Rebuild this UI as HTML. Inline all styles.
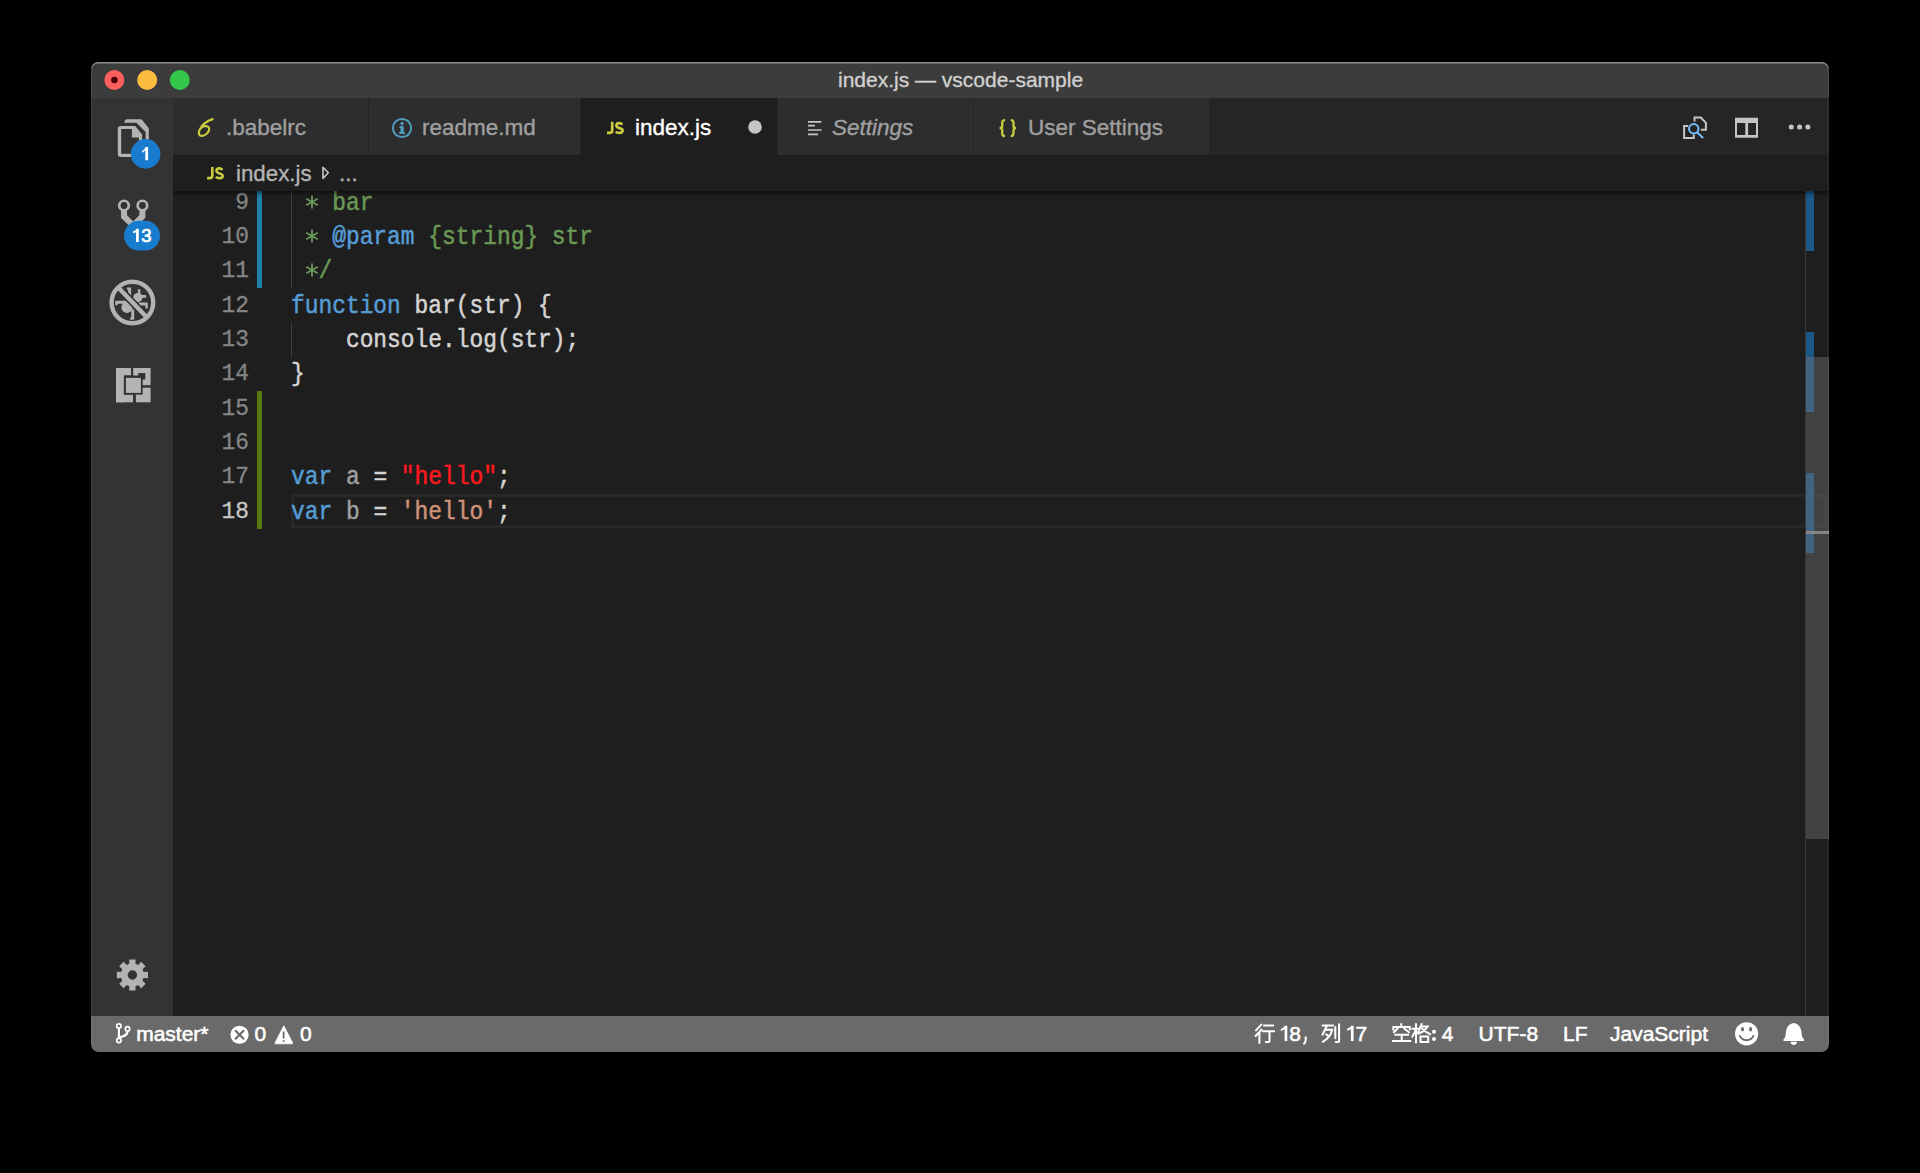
<!DOCTYPE html>
<html><head><meta charset="utf-8">
<style>
*{margin:0;padding:0;box-sizing:border-box}
html,body{width:1920px;height:1173px;background:#000;overflow:hidden}
body{font-family:"Liberation Sans",sans-serif;position:relative}
.abs{position:absolute}
#win{position:absolute;left:91px;top:62px;width:1738px;height:990px;border-radius:7px 7px 8px 8px;overflow:hidden;background:#1e1e1e}
#title{position:absolute;left:0;top:0;width:1738px;height:36px;background:#3c3c3c}
#act{position:absolute;left:0;top:36px;width:82px;height:918px;background:#333333}
#tabs{position:absolute;left:82px;top:36px;width:1656px;height:57px;background:#252526}
.tab{position:absolute;top:0;height:57px;background:#2d2d2d}
.tab.active{background:#1e1e1e}
.ui{position:absolute;font-size:22.5px;line-height:26px;white-space:pre;color:#a0a0a0;-webkit-text-stroke:0.35px currentColor}
#crumb{position:absolute;left:82px;top:93px;width:1656px;height:36px;background:#1e1e1e}
#editor{position:absolute;left:82px;top:129px;width:1656px;height:825px;background:#1e1e1e;overflow:hidden}
#status{position:absolute;left:0;top:954px;width:1738px;height:36px;background:#6a6a6a}
.st{position:absolute;font-size:21px;line-height:24px;white-space:pre;color:#fff;top:6px}
.code{position:absolute;padding-top:1.5px;-webkit-text-stroke:0.45px currentColor;transform:scaleY(1.1);transform-origin:0 24.76px;font-family:"Liberation Mono",monospace;font-size:22.88px;line-height:34.333px;white-space:pre;color:#d4d4d4}
.ln{position:absolute;padding-top:1px;-webkit-text-stroke:0.3px currentColor;transform:scaleY(1.075);transform-origin:0 24.3px;font-family:"Liberation Mono",monospace;font-size:22.88px;line-height:34.333px;white-space:pre;color:#858585;text-align:right;width:100px}
.cm{color:#6a9955}.kw{color:#569cd6}.s1{color:#ce9178}.s2{color:#ff181f}.dim{color:#a0a0a0}
</style></head><body>
<div id="win">
  <div id="title">
    <svg class="abs" style="left:0;top:0" width="120" height="36">
      <circle cx="23.4" cy="18" r="10" fill="#fc605c"/>
      <circle cx="23.4" cy="18" r="3.3" fill="#4d0000"/>
      <circle cx="56.2" cy="18" r="10" fill="#fdbc40"/>
      <circle cx="88.8" cy="18" r="10" fill="#34c84a"/>
    </svg>
    <div class="ui" style="left:747px;top:5px;color:#d0d0d0;font-size:21px">index.js — vscode-sample</div>
  </div>
  <div id="act">
    <svg class="abs" style="left:0;top:0" width="82" height="918" viewBox="91 98 82 918">
      <!-- files -->
      <path d="M124.2 122.8Q124.4 119.2 127.5 119.2H141.5L148.8 128.3V141H145.6V131.9L136.5 122.8Z" fill="#b3b3b3"/>
      <path fill-rule="evenodd" fill="#b3b3b3" d="M117.8 129.1Q117.8 125.9 121 125.9H135.2L142.1 134.5V154Q142.1 157 139 157H121Q117.8 157 117.8 154Z M121.2 129.1V153.7H138.9V137.5H131.9V129.1Z"/>
      <circle cx="145.6" cy="153.9" r="14.8" fill="#197bcd"/>
      <path d="M145.30 160.20V150.30C144.10 151.30 142.70 153.00 142.10 152.80V150.70C144.60 150.20 145.00 148.10 145.50 147.10H148.10V160.20Z" fill="#fff"/>
      <!-- git -->
      <circle cx="124" cy="205.5" r="4.75" fill="none" stroke="#b3b3b3" stroke-width="2.7"/>
      <circle cx="142.4" cy="205.5" r="4.75" fill="none" stroke="#b3b3b3" stroke-width="2.7"/>
      <path d="M124 210V216.4L133.2 225.6L142.4 216.4V210" fill="none" stroke="#b3b3b3" stroke-width="6"/>
      <rect x="124" y="220.8" width="36" height="29.7" rx="14.85" fill="#197bcd"/>
      <path d="M136.00 242.10V231.90C134.80 232.90 133.80 233.40 133.20 233.20V231.10C135.70 230.60 135.70 229.70 136.20 228.70H138.80V242.10Z" fill="#fff"/><text x="141.2" y="242.1" font-family="Liberation Sans" font-size="18.5" fill="#fff" stroke="#fff" stroke-width="0.7">3</text>
      <!-- debug -->
      <circle cx="137.8" cy="297.6" r="4.6" fill="#b3b3b3"/>
      <circle cx="127" cy="307.4" r="5.6" fill="#b3b3b3"/>
      <path fill="#b3b3b3" d="M126.9 287.6H131.1V297.5H128.1V289.6H126.9Z M137.9 289.2H140.3V295.5H137.9Z M139.5 295.1H146.1V297.8H139.5Z M138.6 302.6H147.8V308.4H145.4V305.5H138.6Z M115.3 300.8H126.6V303.8H117.5V305.2H115.3Z M131.3 309.6H134.2V319.7H130.2V317.4H131.3Z"/>
      <path d="M117.5 286.7L147 317.6" stroke="#333333" stroke-width="7.6"/>
      <path d="M117.5 286.7L147 317.6" stroke="#b3b3b3" stroke-width="4.4"/>
      <circle cx="132.4" cy="302.5" r="20.8" fill="none" stroke="#b3b3b3" stroke-width="4.4"/>
      <!-- extensions -->
      <g transform="translate(116 368)">
        <rect x="0" y="0" width="15" height="7.5" fill="#b3b3b3"/>
        <rect x="0" y="0" width="7.9" height="34.3" fill="#b3b3b3"/>
        <rect x="0" y="26.6" width="17" height="7.7" fill="#b3b3b3"/>
        <rect x="17.2" y="0" width="17.4" height="17.2" fill="#b3b3b3"/>
        <rect x="19.9" y="19.7" width="14.7" height="14.6" fill="#b3b3b3"/>
        <rect x="7.9" y="7.5" width="18.8" height="19.1" fill="#333333"/>
        <rect x="22.2" y="5" width="7.1" height="6.6" fill="#333333"/>
        <rect x="9.9" y="9.9" width="15" height="15" fill="#b3b3b3"/>
      </g>
      <!-- gear -->
      <path fill-rule="evenodd" fill="#b3b3b3" d="M135.50 963.82 L135.57 959.42 L129.23 959.42 L129.30 963.82 L126.69 964.90 L123.62 961.74 L119.14 966.22 L122.30 969.29 L121.22 971.90 L116.82 971.83 L116.82 978.17 L121.22 978.10 L122.30 980.71 L119.14 983.78 L123.62 988.26 L126.69 985.10 L129.30 986.18 L129.23 990.58 L135.57 990.58 L135.50 986.18 L138.11 985.10 L141.18 988.26 L145.66 983.78 L142.50 980.71 L143.58 978.10 L147.98 978.17 L147.98 971.83 L143.58 971.90 L142.50 969.29 L145.66 966.22 L141.18 961.74 L138.11 964.90 Z M127.70 975.00 a4.7 4.7 0 1 0 9.4 0 a4.7 4.7 0 1 0 -9.4 0 Z"/>
    </svg>
  </div>
  <div id="tabs">
    
    <svg class="abs" style="left:0;top:0" width="1656" height="57" viewBox="173 98 1656 57">
      <path d="M1694.5 121.5V117.5H1700.8L1705.9 122.8V129.8H1700.8" fill="none" stroke="#c5c5c5" stroke-width="2"/>
      <path d="M1688.2 126H1684.1V137.9H1693.8V134.6" fill="none" stroke="#c5c5c5" stroke-width="2"/>
      <circle cx="1693.75" cy="128.75" r="4.7" fill="none" stroke="#75beff" stroke-width="2"/>
      <path d="M1697.1 132.2L1703.1 138" stroke="#75beff" stroke-width="2"/>
      <path fill-rule="evenodd" fill="#c5c5c5" d="M1735 117.75H1758V137.75H1735Z M1737 123.1H1745.3V135H1737Z M1748.1 123.1H1756V135H1748.1Z"/>
      <circle cx="1791.25" cy="126.9" r="2.5" fill="#c5c5c5"/>
      <circle cx="1799.6" cy="126.9" r="2.5" fill="#c5c5c5"/>
      <circle cx="1807.9" cy="126.9" r="2.5" fill="#c5c5c5"/>
    </svg>
  <div class="tab" style="left:0;width:195px">
      <svg class="abs" style="left:21px;top:18px" width="24" height="24" viewBox="194 116.6 24 24"><path d="M212.6 119.7C207 121.6 201.5 126 199.4 131C198 134.5 199.2 136.7 202.2 136.4C205.6 136 209.2 132.8 209.2 129.6C209.2 127.2 207 126.4 204.6 126.7C202.6 127 201.2 128 200.4 129.3" fill="none" stroke="#cbcb41" stroke-width="2.2" stroke-linecap="round"/></svg>
      <div class="ui" style="left:53px;top:17px">.babelrc</div>
    </div>
    <div class="tab" style="left:196px;width:211px">
      <svg class="abs" style="left:22px;top:19px" width="22" height="22" viewBox="0 0 22 22"><circle cx="11" cy="11" r="9.1" fill="none" stroke="#519aba" stroke-width="2"/><circle cx="11" cy="6.5" r="1.65" fill="#519aba"/><path d="M8.5 9.1H12.7V15.1H13.9V17H8.2V15.1H9.5V10.9H8.5Z" fill="#519aba"/></svg>
      <div class="ui" style="left:53px;top:17px">readme.md</div>
    </div>
    <div class="tab active" style="left:408px;width:196px">
      <svg class="abs" style="left:25px;top:21px" width="20" height="17"><g transform="translate(0 3)"><path d="M6.2 -0.3V8.4Q6.2 10.85 3.6 10.85H1M16.4 2.5Q15 1.05 13.1 1.05Q10.4 1.05 10.4 3.5Q10.4 5.3 13.5 6.1Q16.6 6.9 16.6 8.6Q16.6 10.85 13.3 10.85Q11 10.85 9.7 9.6" fill="none" stroke="#cbcb41" stroke-width="2.7"/></g></svg>
      <div class="ui" style="left:54px;top:17px;color:#ffffff">index.js</div>
      <svg class="abs" style="left:167px;top:22px" width="14" height="14"><circle cx="7" cy="7" r="6.8" fill="#c5c5c5"/></svg>
    </div>
    <div class="tab" style="left:605px;width:195px">
      <svg class="abs" style="left:30px;top:22px" width="16" height="16"><path d="M0 1.9h13.5M0 5.6h7M0 10h13.5M0 14.4h10" stroke="#c5c5c5" stroke-width="1.6"/></svg>
      <div class="ui" style="left:54px;top:17px;font-style:italic">Settings</div>
    </div>
    <div class="tab" style="left:801px;width:235px">
      <svg class="abs" style="left:22px;top:17px" width="24" height="24" viewBox="996 115 24 24"><path d="M1005 120.1Q1002.2 120.1 1002.2 122.6V125.9Q1002.2 128 999.6 128Q1002.2 128 1002.2 130.1V133.6Q1002.2 136.1 1005 136.1M1010.7 120.1Q1013.5 120.1 1013.5 122.6V125.9Q1013.5 128 1016.1 128Q1013.5 128 1013.5 130.1V133.6Q1013.5 136.1 1010.7 136.1" fill="none" stroke="#cbcb41" stroke-width="2.3"/></svg>
      <div class="ui" style="left:54px;top:17px">User Settings</div>
    </div>
  </div>
  <div id="crumb">
    <svg class="abs" style="left:34px;top:11px" width="20" height="16"><g transform="translate(-0.9 1.3)"><path d="M6.2 -0.3V8.4Q6.2 10.85 3.6 10.85H1M16.4 2.5Q15 1.05 13.1 1.05Q10.4 1.05 10.4 3.5Q10.4 5.3 13.5 6.1Q16.6 6.9 16.6 8.6Q16.6 10.85 13.3 10.85Q11 10.85 9.7 9.6" fill="none" stroke="#cbcb41" stroke-width="2.6"/></g></svg>
    <div class="ui" style="left:63px;top:6px;color:#b4b4b4;font-size:22.3px">index.js</div>
    <svg class="abs" style="left:149px;top:11px" width="8" height="14"><path d="M1 1.2L6.3 6.8L1 12.4z" fill="none" stroke="#c5c5c5" stroke-width="1.6" stroke-linejoin="round"/></svg>
    <div class="ui" style="left:166px;top:6px;color:#b4b4b4;font-size:22.3px">...</div>
  </div>
  <div id="editor">
    <div class="abs" style="left:84px;top:0;width:5px;height:97.2px;background:#1b81a8"></div>
    <div class="abs" style="left:84px;top:200.2px;width:5px;height:137.4px;background:#587c0c"></div>
    <div class="abs" style="left:118px;top:0;width:1px;height:97.2px;background:#404040"></div>
    <div class="abs" style="left:118px;top:131.5px;width:1px;height:34.3px;background:#404040"></div>
    <div class="abs" style="left:118px;top:303.4px;width:1536px;height:34px;border:3px solid #282828"></div>

    <div class="ln" style="left:-24px;top:-6.3px">9</div>
    <div class="ln" style="left:-24px;top:28.03px">10</div>
    <div class="ln" style="left:-24px;top:62.37px">11</div>
    <div class="ln" style="left:-24px;top:96.7px">12</div>
    <div class="ln" style="left:-24px;top:131.03px">13</div>
    <div class="ln" style="left:-24px;top:165.37px">14</div>
    <div class="ln" style="left:-24px;top:199.7px">15</div>
    <div class="ln" style="left:-24px;top:234.03px">16</div>
    <div class="ln" style="left:-24px;top:268.37px">17</div>
    <div class="ln" style="left:-24px;top:302.7px;color:#c6c6c6">18</div>
    <svg class="abs" style="left:131px;top:2.70px" width="16" height="16" viewBox="-8 -8 16 16"><path d="M0 -6.6V6.6M-5.7 -3.3L5.7 3.3M-5.7 3.3L5.7 -3.3" stroke="#6a9955" stroke-width="1.8"/></svg>
    <svg class="abs" style="left:131px;top:37.03px" width="16" height="16" viewBox="-8 -8 16 16"><path d="M0 -6.6V6.6M-5.7 -3.3L5.7 3.3M-5.7 3.3L5.7 -3.3" stroke="#6a9955" stroke-width="1.8"/></svg>
    <svg class="abs" style="left:131px;top:71.37px" width="16" height="16" viewBox="-8 -8 16 16"><path d="M0 -6.6V6.6M-5.7 -3.3L5.7 3.3M-5.7 3.3L5.7 -3.3" stroke="#6a9955" stroke-width="1.8"/></svg>
    <div class="code" style="left:118px;top:-6.3px"><span class="cm">   bar</span></div>
    <div class="code" style="left:118px;top:28.03px"><span class="cm">   </span><span class="kw">@param</span><span class="cm"> {string} str</span></div>
    <div class="code" style="left:118px;top:62.37px"><span class="cm">  /</span></div>
    <div class="code" style="left:118px;top:96.7px"><span class="kw">function</span> bar(str) {</div>
    <div class="code" style="left:118px;top:131.03px">    console.log(str);</div>
    <div class="code" style="left:118px;top:165.37px">}</div>
    <div class="code" style="left:118px;top:268.37px"><span class="kw">var</span> <span class="dim">a</span> = <span class="s2">"hello"</span>;</div>
    <div class="code" style="left:118px;top:302.7px"><span class="kw">var</span> <span class="dim">b</span> = <span class="s1">'hello'</span>;</div>

    <div class="abs" style="left:1632px;top:0;width:1px;height:825px;background:#373737"></div>
    <div class="abs" style="left:1633px;top:0.3px;width:8px;height:59.3px;background:#1b5888"></div>
    <div class="abs" style="left:1633px;top:141.3px;width:8px;height:79.3px;background:#1b5888"></div>
    <div class="abs" style="left:1633px;top:282.2px;width:8px;height:80.3px;background:#1b5888"></div>
    <div class="abs" style="left:1633px;top:339.8px;width:23px;height:3px;background:#8e8e8e"></div>
    <div class="abs" style="left:1633px;top:165.5px;width:23px;height:482.7px;background:rgba(121,121,121,0.4)"></div>
    <div class="abs" style="left:0;top:0;width:1656px;height:8px;background:linear-gradient(rgba(0,0,0,0.4) 0px,rgba(0,0,0,0.36) 2px,rgba(0,0,0,0.12) 3.5px,rgba(0,0,0,0.06) 6px,rgba(0,0,0,0) 8px)"></div>
  </div>
  <div id="status">
    <svg class="abs" style="left:0;top:0" width="1738" height="36" viewBox="91 1016 1738 36">
      <g fill="none" stroke="#ffffff">
        <circle cx="118.9" cy="1026" r="2.2" stroke-width="1.7"/>
        <circle cx="127.5" cy="1028.9" r="2.2" stroke-width="1.7"/>
        <circle cx="118.9" cy="1040.5" r="2.2" stroke-width="1.7"/>
        <path d="M118.9 1028.2V1038.3" stroke-width="2.2"/>
        <path d="M127.5 1031.1C127.5 1035.5 124 1036.6 119 1037.4" stroke-width="2.2"/>
      </g>
      <g font-family="Liberation Sans" font-size="21" fill="#ffffff" stroke="#ffffff" stroke-width="0.55">
        <text x="136.2" y="1041">master*</text>
        <text x="254.6" y="1041">0</text>
        <text x="299.9" y="1041">0</text>
        <text x="1289.2" y="1041">8</text>
        <text x="1355.6" y="1041">7</text>
        
        <text x="1441.8" y="1041">4</text>
        <text x="1478.6" y="1041">UTF-8</text>
        <text x="1563" y="1041">LF</text>
        <text x="1610" y="1041">JavaScript</text>
      </g>
      <path d="M1284.60 1041.00V1029.00C1283.40 1030.00 1281.40 1031.20 1280.80 1031.00V1028.90C1283.30 1028.40 1284.30 1026.80 1284.80 1025.80H1287.30V1041.00Z" fill="#fff"/><path d="M1350.90 1041.00V1029.00C1349.70 1030.00 1347.80 1030.90 1347.20 1030.70V1028.60C1349.70 1028.10 1350.60 1026.80 1351.10 1025.80H1353.60V1041.00Z" fill="#fff"/>
      <circle cx="239.55" cy="1034.75" r="9.1" fill="#ffffff"/>
      <path d="M235.1 1030.3L244 1039.2M244 1030.3L235.1 1039.2" stroke="#6a6a6a" stroke-width="2.2"/>
      <path d="M283.8 1025.8L292.6 1042.8Q292.9 1043.8 291.8 1043.8H275.8Q274.7 1043.8 275.1 1042.8Z" fill="#ffffff" stroke="#ffffff" stroke-width="0.8" stroke-linejoin="round"/>
      <path d="M283.6 1031.4V1038.6M283.6 1040.2V1042" stroke="#6a6a6a" stroke-width="1.8"/>
      <g fill="none" stroke="#ffffff" stroke-width="2" stroke-linecap="round">
        <!-- 行 -->
        <path d="M1261.3 1024.6L1256 1030.4M1261.5 1029.6L1255.6 1036M1259.4 1032.8V1043"/>
        <path d="M1263.9 1025.6H1273.2M1262.8 1031.3H1274.2M1269.5 1031.3V1041.2Q1269.5 1042 1268.5 1042H1265.8"/>
        <!-- ， -->
        <path d="M1305.7 1037.3V1040Q1305.5 1042.6 1304 1043.6"/>
        <!-- 列 -->
        <path d="M1322.6 1025.6H1333.2M1326.7 1026.3L1322.5 1034.8M1325 1029.8H1332.2Q1330.6 1037.3 1322.8 1041.8M1326.2 1034.4L1328.4 1036"/>
        <path d="M1335.3 1027V1038.3M1339.1 1024.3V1041.2Q1339.1 1042 1338 1042H1335.8"/>
        <!-- 空 -->
        <path d="M1401.2 1023.9V1026.1M1393.3 1029.8V1026.9H1409.8V1029.6M1397.6 1028.5L1393.9 1032.3M1404.2 1028.5L1409 1032.3M1395.1 1034.7H1408.3M1401.7 1034.7V1041.1M1392.8 1041.1H1410.5"/>
        <!-- 格 -->
        <path d="M1412.2 1028.8H1418M1416 1023.9V1042.6M1416 1029.5L1412.3 1036.7M1416.6 1031.6L1418.2 1033.4"/>
        <path d="M1421.7 1024L1418.6 1031.4M1421.3 1026.4H1427.7Q1424.5 1031.4 1418.6 1033.6M1422 1028.6Q1425.6 1032.2 1430.3 1034.1"/>
        <path d="M1420.5 1036.4H1428.2V1042.1H1420.5Z" stroke-linecap="butt" stroke-linejoin="miter"/>
      </g>
      <circle cx="1434" cy="1031.8" r="2" fill="#ffffff"/><circle cx="1434" cy="1039" r="2" fill="#ffffff"/>
      <circle cx="1746.6" cy="1033.8" r="11.6" fill="#ffffff"/>
      <ellipse cx="1742.5" cy="1029.3" rx="1.5" ry="2.2" fill="#6a6a6a"/>
      <ellipse cx="1750.6" cy="1029.3" rx="1.5" ry="2.2" fill="#6a6a6a"/>
      <path d="M1739.8 1035.9A7.5 7.5 0 0 0 1753.4 1035.9" fill="none" stroke="#6a6a6a" stroke-width="1.8" stroke-linecap="round"/>
      <path d="M1793.75 1023C1788.5 1023.8 1786 1028 1785.8 1033.5C1785.6 1036.6 1785 1038 1783.5 1039.3V1040.9H1804V1039.3C1802.5 1038 1801.9 1036.6 1801.7 1033.5C1801.5 1028 1799 1023.8 1793.75 1023Z" fill="#ffffff"/>
      <path d="M1790.6 1041.8A3.15 3.15 0 0 0 1796.9 1041.8Z" fill="#ffffff"/>
    </svg>
  </div>
  <div class="abs" style="left:0;top:0;width:1738px;height:990px;border-radius:7px 7px 8px 8px;box-shadow:inset 0 1.6px 0 rgba(255,255,255,0.42),inset 1.5px 0 0 rgba(255,255,255,0.05),inset -1.5px 0 0 rgba(255,255,255,0.05)"></div>
</div>
</body></html>
